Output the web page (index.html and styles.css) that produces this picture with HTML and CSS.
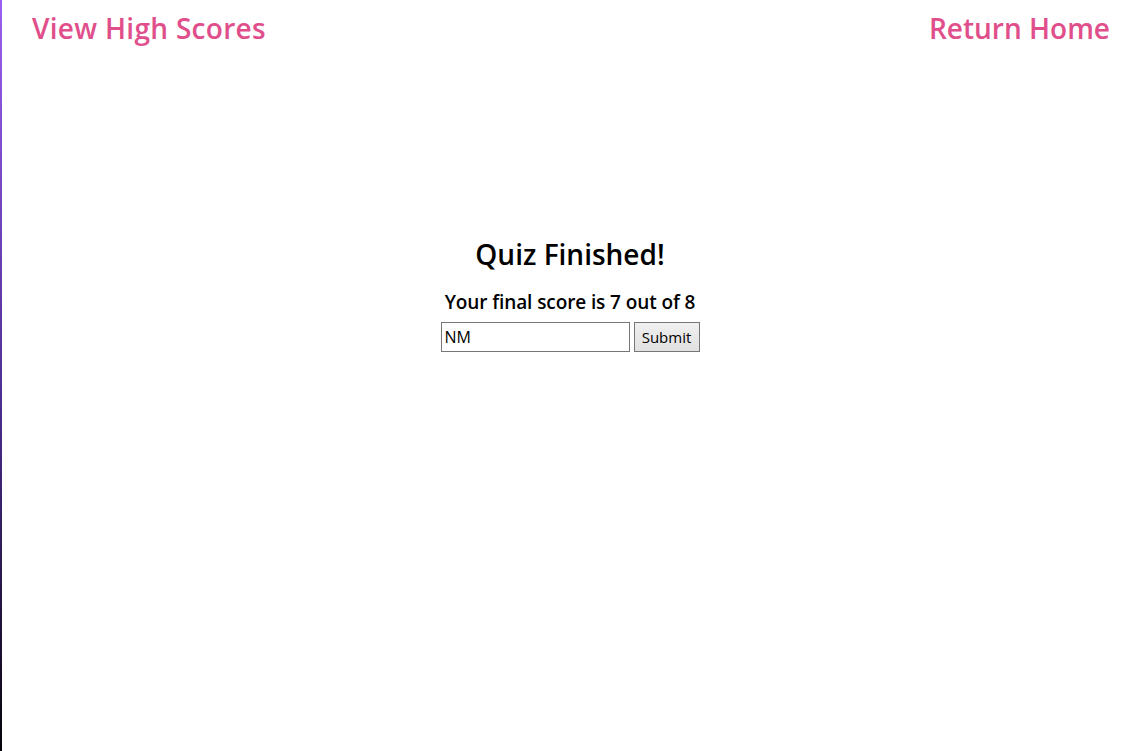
FILE: index.html
```html
<!DOCTYPE html>
<html lang="en">
<head>
<meta charset="utf-8">
<title>Quiz Finished</title>
<link rel="stylesheet" href="styles.css">
</head>
<body>
<div class="page">
  <header class="topbar">
    <a class="navlink" href="#">View High Scores</a>
    <a class="navlink" href="#">Return Home</a>
  </header>
  <main class="result">
    <h1 class="title">Quiz Finished!</h1>
    <p class="score">Your final score is 7 out of 8</p>
    <form class="entry">
      <input class="name-input" type="text" value="NM">
      <button class="submit-btn" type="button">Submit</button>
    </form>
  </main>
</div>
</body>
</html>
```
FILE: styles.css
```css
* { box-sizing: border-box; }
html, body { margin: 0; padding: 0; height: 100%; background: #fff; }
body { font-family: "Open Sans", "Noto Sans", sans-serif; }
.page {
  min-height: 100vh;
  border-left: 2px solid #000;
  border-image: linear-gradient(to bottom, #9b5ff0, #4a2c8c 55%, #050308) 1;
  padding-right: 2px;
}
.topbar {
  display: flex;
  justify-content: space-between;
  align-items: center;
  padding: 8px 28px 0 30px;
}
.navlink {
  color: #e04f8b;
  text-decoration: none;
  font-size: 28px;
  font-weight: 600;
  line-height: 40px;
}
.navlink:first-child { letter-spacing: 0.3px; }
.result {
  display: flex;
  flex-direction: column;
  align-items: center;
  margin-top: 188px;
}
.title {
  margin: 0;
  font-size: 28px;
  font-weight: 600;
  line-height: 36px;
  color: #000;
}
.score {
  margin: 18px 0 0;
  font-size: 19px;
  font-weight: 600;
  letter-spacing: -0.1px;
  line-height: 25px;
}
.entry {
  display: flex;
  gap: 4px;
  margin-top: 7px;
}
.name-input {
  width: 189px;
  height: 30px;
  border: 1px solid #767676;
  padding: 2px 3px;
  font-family: inherit;
  font-size: 16px;
  color: #000;
}
.submit-btn {
  width: 66px;
  height: 30px;
  border: 1px solid #767676;
  background: linear-gradient(#f0f0f0, #e1e1e1);
  font-family: inherit;
  font-size: 15px;
  padding: 0;
  color: #000;
}
```
